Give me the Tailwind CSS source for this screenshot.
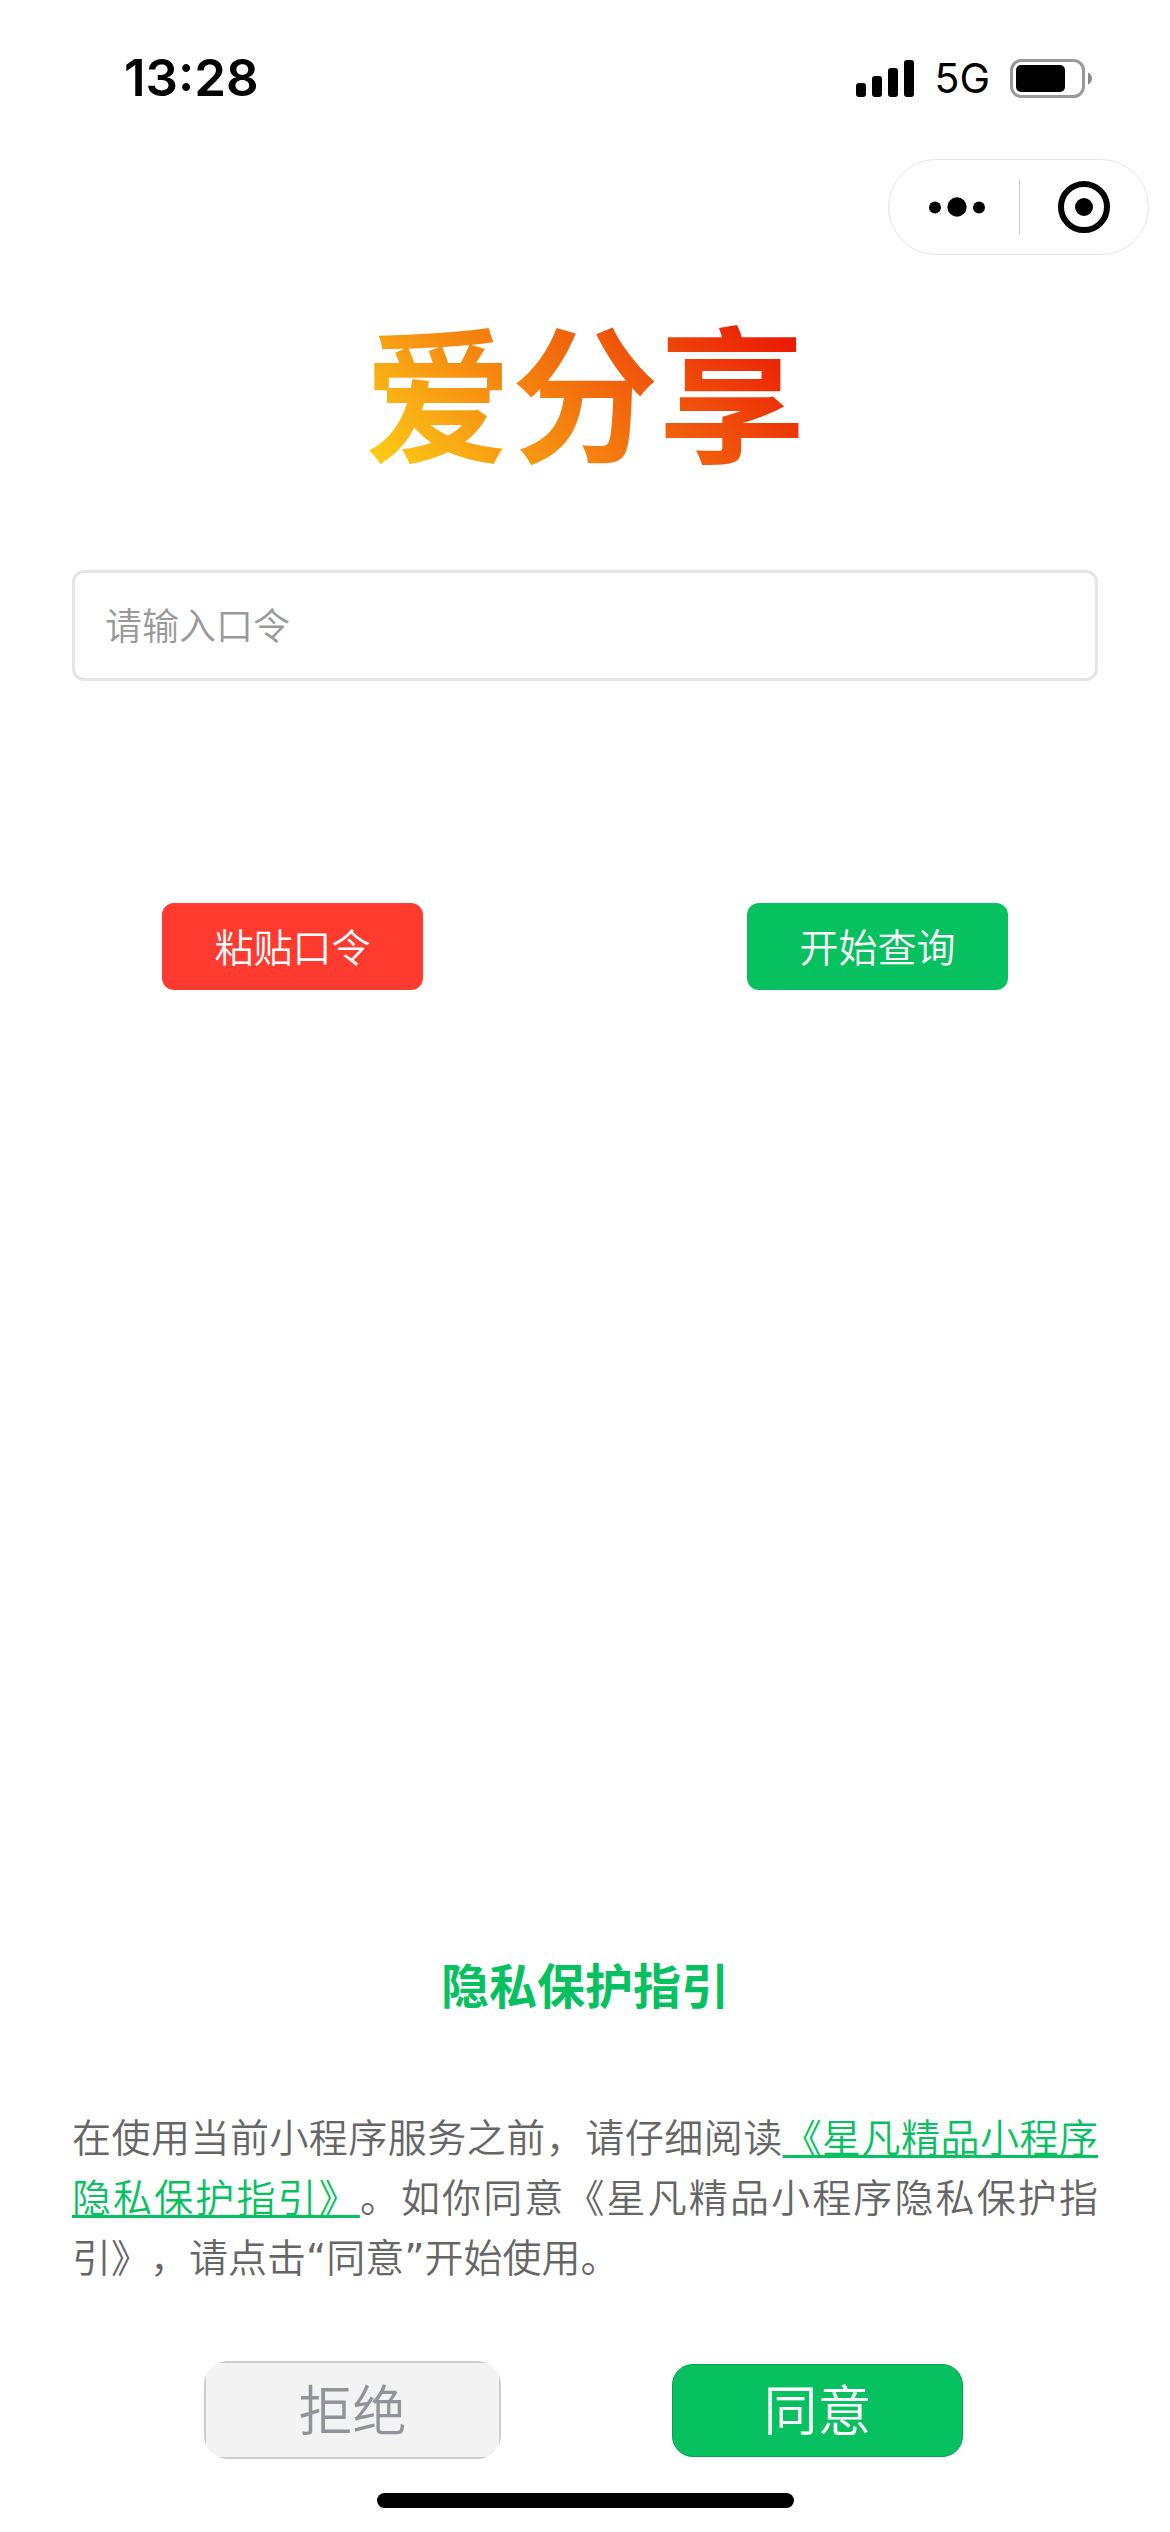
<!DOCTYPE html>
<html lang="zh-CN">
<head>
<meta charset="utf-8">
<meta name="viewport" content="width=device-width, initial-scale=1">
<title>爱分享</title>
<script src="https://cdn.jsdelivr.net/npm/@tailwindcss/browser@4"></script>
</head>
<body class="bg-white font-['Noto_Sans_CJK_SC',sans-serif]">
<div class="flex min-h-screen flex-col">

  <!-- Status bar -->
  <header class="flex h-[156px] items-center justify-between pr-[78px] pl-[124px] font-['Inter',sans-serif] text-black">
    <time class="text-[51px] font-semibold leading-[60px]">13:28</time>
    <div class="flex items-center gap-5">
      <svg class="h-[37px] w-[58px]" viewBox="0 0 58 37" aria-hidden="true">
        <rect x="0" y="23" width="10" height="14" rx="3"/>
        <rect x="16" y="16" width="10" height="21" rx="3"/>
        <rect x="32" y="8" width="10" height="29" rx="3"/>
        <rect x="48" y="0" width="10" height="37" rx="3"/>
      </svg>
      <span class="text-[41px] leading-[60px]">5G</span>
      <svg class="h-[39px] w-[82px]" viewBox="0 0 82 39" aria-hidden="true">
        <rect x="1.5" y="1.5" width="72" height="36" rx="10" fill="none" stroke="#999" stroke-width="3"/>
        <rect x="6" y="6" width="49" height="27" rx="5"/>
        <path d="M78 13.500C80.500 14.500 82 17 82 19.500S80.500 24.500 78 25.500Z" fill="#888"/>
      </svg>
    </div>
  </header>

  <!-- Mini program capsule -->
  <nav class="flex justify-end pt-[3px] pr-[21px]">
    <div class="flex h-[96px] w-[261px] items-center rounded-full border border-[#e6e6e6]">
      <button type="button" aria-label="更多" class="flex w-[130px] justify-center pl-[6px]">
        <svg class="h-[20px] w-[56px]" viewBox="0 0 56 20"><circle cx="6" cy="10.500" r="6"/><circle cx="28" cy="10" r="9.700"/><circle cx="50" cy="10.500" r="6"/></svg>
      </button>
      <span class="h-[56px] w-px bg-[#ccc]"></span>
      <button type="button" aria-label="关闭" class="flex flex-1 justify-center">
        <svg class="h-[52px] w-[52px]" viewBox="0 0 52 52"><circle cx="26" cy="26" r="23" fill="none" stroke="#000" stroke-width="6"/><circle cx="26" cy="26" r="9"/></svg>
      </button>
    </div>
  </nav>

  <main class="flex flex-1 flex-col px-[72px]">
    <h1 class="mt-[42px] self-center bg-linear-[45deg,#fccc17_4%,#ea1304_94%] bg-clip-text text-[147px] font-bold leading-[180px] text-transparent">爱分享</h1>

    <input type="text" aria-label="请输入口令" placeholder="请输入口令" class="mt-[93px] h-[111px] w-full rounded-[12px] border-3 border-[#e5e5e5] px-[30px] pb-[3px] text-[37px] font-[350] placeholder:text-[#999]">

    <div class="-mx-[72px] mt-[222px] grid grid-cols-2 justify-items-center text-[39px] font-[350] text-white">
      <button type="button" class="h-[87px] w-[261px] rounded-[12px] bg-[#ff3b30] pb-[3px]">粘贴口令</button>
      <button type="button" class="h-[87px] w-[261px] rounded-[12px] bg-[#07c160] pb-[3px]">开始查询</button>
    </div>

    <section class="mt-auto">
      <h2 class="text-center text-[48px] font-bold leading-[60px] text-[#07c160]">隐私保护指引</h2>
      <p class="mt-[92px] text-justify text-[39px] font-[350] leading-[60px] text-[#666] [text-spacing-trim:space-all]">在使用当前小程序服务之前，请仔细阅读<a href="#" class="text-[#07c160] underline decoration-3 underline-offset-3 [text-decoration-skip-ink:none]">《星凡精品小程序隐私保护指引》</a>。如你同意《星凡精品小程序隐私保护指引》，请点击<span class="font-['DejaVu_Sans',sans-serif] font-normal leading-none">“</span>同意<span class="font-['DejaVu_Sans',sans-serif] font-normal leading-none">”</span>开始使用。</p>
      <div class="mt-[76px] flex items-center justify-center gap-[171px] pr-[3px] text-[54px] font-[350]">
        <button type="button" class="flex h-[98px] w-[297px] overflow-hidden rounded-[24px] bg-[#f3f3f3] text-[#90939a]"><span class="flex size-full items-center justify-center border-2 border-[#ccc] pb-[6px]">拒绝</span></button>
        <button type="button" class="h-[93px] w-[291px] rounded-[21px] border border-[#06a050] bg-[#07c160] pb-[6px] text-white">同意</button>
      </div>
    </section>
  </main>

  <footer class="flex justify-center pt-[34px] pb-6">
    <div class="h-[15px] w-[417px] rounded-full bg-black"></div>
  </footer>
</div>
</body>
</html>
